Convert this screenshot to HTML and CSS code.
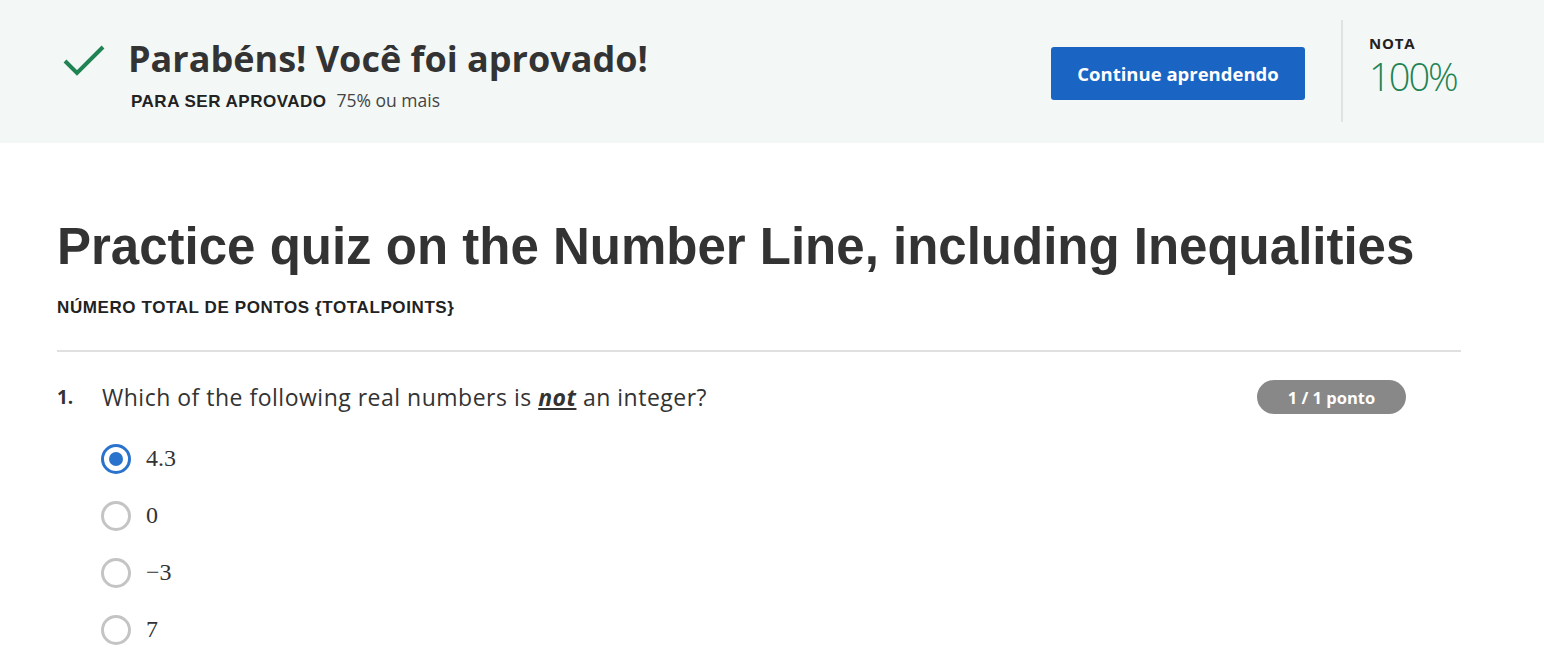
FILE: index.html
```html
<!DOCTYPE html>
<html lang="pt">
<head>
<meta charset="utf-8">
<title>Quiz</title>
<link rel="stylesheet" href="styles.css">
</head>
<body>
<header class="banner">
  <div class="banner-left">
    <svg class="check" width="44" height="34" viewBox="0 0 44 34"><path d="M3 17 L15 29 L41 3" fill="none" stroke="#1f8354" stroke-width="4"/></svg>
    <div class="banner-text">
      <h1 class="congrats">Parabéns! Você foi aprovado!</h1>
      <div class="pass-req"><span class="pass-label">PARA SER APROVADO</span><span class="pass-value">75% ou mais</span></div>
    </div>
  </div>
  <div class="banner-right">
    <button class="continue-btn">Continue aprendendo</button>
    <div class="grade">
      <div class="grade-label">NOTA</div>
      <div class="grade-value">100%</div>
    </div>
  </div>
</header>
<main class="content">
  <h2 class="quiz-title">Practice quiz on the Number Line, including Inequalities</h2>
  <div class="total-points">NÚMERO TOTAL DE PONTOS {TOTALPOINTS}</div>
  <hr class="divider">
  <section class="question">
    <div class="q-head">
      <span class="q-num">1.</span>
      <span class="q-text">Which of the following real numbers is <em class="not">not</em> an integer?</span>
      <span class="badge">1 / 1 ponto</span>
    </div>
    <ul class="options">
      <li class="option"><span class="radio selected"></span><span class="opt-text">4.3</span></li>
      <li class="option"><span class="radio"></span><span class="opt-text">0</span></li>
      <li class="option"><span class="radio"></span><span class="opt-text">−3</span></li>
      <li class="option"><span class="radio"></span><span class="opt-text">7</span></li>
    </ul>
  </section>
</main>
</body>
</html>
```
FILE: styles.css
```css
* { box-sizing: border-box; }
body { margin: 0; font-family: "Open Sans", sans-serif; color: #333; background: #fff; }

.banner {
  background: #f3f8f6;
  height: 143px;
  display: flex;
  justify-content: space-between;
  padding: 0 83px 0 62px;
}
.banner-left { display: flex; align-items: flex-start; padding-top: 38px; }
.check { margin-right: 22px; margin-top: 6px; }
.congrats {
  margin: 0;
  font-size: 36px;
  font-weight: 700;
  line-height: 42px;
  color: #333;
}
.pass-req { margin-top: 8px; margin-left: 3px; display: flex; align-items: baseline; }
.pass-label { font-family: "Liberation Sans", Arial, sans-serif; font-weight: 700; font-size: 17px; letter-spacing: 0.5px; color: #222; margin-right: 10px; }
.pass-value { font-size: 17.5px; color: #444; }

.banner-right { display: flex; align-items: stretch; padding: 20px 0 21px; }
.continue-btn {
  align-self: flex-start;
  margin-top: 27px;
  width: 254px;
  height: 53px;
  background: #1a64c4;
  color: #fff;
  border: none;
  border-radius: 3px;
  font-family: "Open Sans", sans-serif;
  font-weight: 700;
  font-size: 18.5px;
  margin-right: 36px;
}
.grade { width: 120px; border-left: 2px solid #dfe3e1; padding-left: 26px; padding-top: 14px; }
.grade-label { font-weight: 700; font-size: 15px; color: #222; line-height: 18px; letter-spacing: 0.8px; }
.grade-value { font-size: 38px; color: #1f8354; line-height: 44px; font-weight: 300; letter-spacing: -2px; margin-top: 2px; }

.content { padding: 75px 83px 0 57px; }
.quiz-title {
  margin: 0;
  font-family: "Liberation Sans", Arial, sans-serif;
  font-weight: 700;
  font-size: 51px;
  line-height: 58px;
  color: #333;
}
.total-points {
  margin-top: 22px;
  font-family: "Liberation Sans", Arial, sans-serif;
  font-weight: 700;
  font-size: 17px;
  letter-spacing: 0.6px;
  color: #222;
}
.divider { border: 0; border-top: 2px solid #e0e0e0; margin: 32px 0 0; }

.question { padding-top: 27px; }
.q-head { display: flex; align-items: center; height: 36px; }
.q-num { width: 45px; font-weight: 700; font-size: 19px; color: #333; }
.q-text { flex: 1; font-size: 23px; letter-spacing: 0.5px; color: #333; }
.not { font-weight: 700; text-decoration: underline; }
.badge {
  margin-right: 55px;
  width: 149px;
  height: 34px;
  border-radius: 17px;
  background: #888;
  color: #fff;
  font-weight: 700;
  font-size: 16.5px;
  display: flex;
  align-items: center;
  justify-content: center;
}

.options { list-style: none; margin: 15px 0 0; padding: 0 0 0 44px; }
.option { display: flex; align-items: center; height: 57px; }
.radio {
  width: 30px; height: 30px;
  border: 3px solid #c4c4c4;
  border-radius: 50%;
  margin-right: 15px;
  display: flex; align-items: center; justify-content: center;
}
.radio.selected { border-color: #2a73cc; }
.radio.selected::after { content: ""; width: 14px; height: 14px; border-radius: 50%; background: #2a73cc; }
.opt-text { font-family: "Liberation Serif", "Times New Roman", serif; font-size: 24px; color: #333; }
```
